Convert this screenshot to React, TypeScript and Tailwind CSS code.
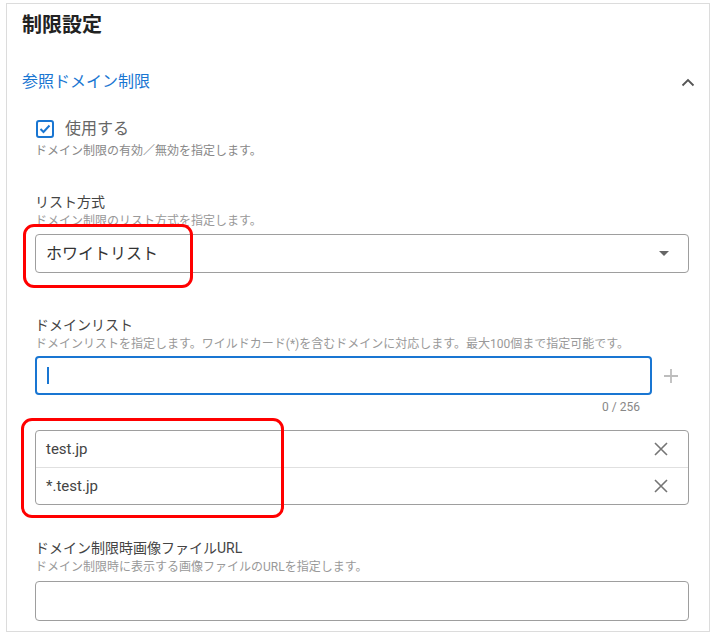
import React from "react";

const font = { fontFamily: "Roboto, 'Noto Sans CJK JP', 'Noto Sans', sans-serif" };

function XIcon() {
  return (
    <svg width="16" height="16" viewBox="0 0 16 16" className="text-[#757575]">
      <path d="M2 2 L14 14 M14 2 L2 14" stroke="currentColor" strokeWidth="1.6" fill="none" />
    </svg>
  );
}

export default function App() {
  return (
    <div className="w-[716px] h-[638px] bg-white pt-[3px] pl-[6px]" style={font}>
      <div className="relative w-[704px] h-[629px] border border-[#dcdcdc] bg-white pl-[15px] pr-[20px]">
        <div className="pt-[8px] h-[32px] text-[20px] font-bold leading-[26px] text-[#222]">制限設定</div>

        <div className="mt-[35px] flex items-center justify-between h-[22px]">
          <span className="text-[16px] text-[#1976d2] leading-[22px]">参照ドメイン制限</span>
          <svg width="14" height="9" viewBox="0 0 14 9" className="mr-[-6px] text-[#555]">
            <path d="M1.5 7.5 L7 2 L12.5 7.5" stroke="currentColor" strokeWidth="1.8" fill="none" />
          </svg>
        </div>

        <div className="pl-[13px]">
          <div className="mt-[26px] flex items-center h-[20px]">
            <svg width="18" height="18" viewBox="0 0 18 18" className="ml-[1px]">
              <rect x="1" y="1" width="16" height="16" rx="2" fill="white" stroke="#1976d2" strokeWidth="2" />
              <path d="M4.5 9 L7.5 12 L13.5 5.5" stroke="#1976d2" strokeWidth="2" fill="none" />
            </svg>
            <span className="ml-[11px] text-[16px] text-[#666] leading-[20px]">使用する</span>
          </div>
          <div className="mt-[4px] text-[12px] leading-[16px] text-[#888]">ドメイン制限の有効／無効を指定します。</div>

          <div className="mt-[34px] text-[14px] leading-[18px] text-[#444]">リスト方式</div>
          <div className="mt-[2px] text-[12px] leading-[16px] text-[#999]">ドメイン制限のリスト方式を指定します。</div>
          <div className="mt-[5px] h-[39px] border border-[#9e9e9e] rounded-[4px] flex items-center justify-between pl-[10px] pr-[19px]">
            <span className="text-[16px] text-[#333]">ホワイトリスト</span>
            <svg width="10" height="5" viewBox="0 0 10 5">
              <path d="M0 0 L10 0 L5 5 Z" fill="#666" />
            </svg>
          </div>

          <div className="mt-[43px] text-[14px] leading-[18px] text-[#444]">ドメインリスト</div>
          <div className="mt-[2px] text-[12px] leading-[16px] text-[#999] whitespace-nowrap">
            ドメインリストを指定します。ワイルドカード(*)を含むドメインに対応します。最大100個まで指定可能です。
          </div>
          <div className="mt-[4px] flex items-center">
            <div className="w-[617px] h-[39px] border-2 border-[#1976d2] rounded-[4px] flex items-center pl-[10px]">
              <div className="w-[1.5px] h-[17px] bg-[#1976d2]"></div>
            </div>
            <svg width="16" height="16" viewBox="0 0 16 16" className="ml-[11px]">
              <path d="M8 1 V15 M1 8 H15" stroke="#bdbdbd" strokeWidth="1.8" fill="none" />
            </svg>
          </div>
          <div className="w-[605px] text-right text-[12px] leading-[14px] text-[#888] mt-[5px]">0 / 256</div>

          <div className="mt-[16px] border border-[#9e9e9e] rounded-[4px]">
            <div className="h-[37px] flex items-center justify-between pl-[10px] pr-[19px] border-b border-[#e0e0e0]">
              <span className="text-[15px] text-[#444]">test.jp</span>
              <XIcon />
            </div>
            <div className="h-[36px] flex items-center justify-between pl-[10px] pr-[19px]">
              <span className="text-[15px] text-[#444]">*.test.jp</span>
              <XIcon />
            </div>
          </div>

          <div className="mt-[34px] text-[14px] leading-[18px] text-[#444]">ドメイン制限時画像ファイルURL</div>
          <div className="mt-[2px] text-[12px] leading-[16px] text-[#999]">ドメイン制限時に表示する画像ファイルのURLを指定します。</div>
          <div className="mt-[6px] h-[40px] border border-[#9e9e9e] rounded-[4px]"></div>
        </div>

        <div className="absolute left-[16px] top-[220px] w-[170px] h-[64px] border-[3px] border-[#ff0000] rounded-[11px]"></div>
        <div className="absolute left-[14px] top-[414px] w-[263px] h-[100px] border-[3px] border-[#ff0000] rounded-[11px]"></div>
      </div>
    </div>
  );
}
